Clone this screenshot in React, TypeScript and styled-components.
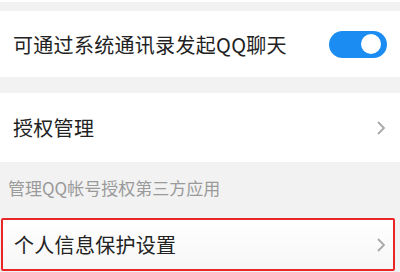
import styled, { createGlobalStyle } from "styled-components"

const GlobalStyle = createGlobalStyle`
    html, body {
        margin: 0;
        padding: 0;
        background: #f2f2f2;
        font-family: "Noto Sans CJK SC", "Noto Sans", sans-serif;
    }
`

const Page = styled.div`
    width: 400px;
    height: 272px;
    overflow: hidden;
    background: #f2f2f2;
    display: flex;
    flex-direction: column;
`

const TopGap = styled.div`
    height: 9px;
    border-top: 2px solid #ffffff;
`

const Gap = styled.div<{ $h: number }>`
    height: ${p => p.$h}px;
`

const Row = styled.div<{ $h: number; $highlight?: boolean }>`
    height: ${p => p.$h}px;
    box-sizing: border-box;
    background: #ffffff;
    display: flex;
    align-items: center;
    justify-content: space-between;
    padding: 0 14px 0 13px;
    ${p => p.$highlight && `
        margin: 0 5px 0 1px;
        border: 2px solid #e8262a;
        border-radius: 2px;
        padding: 0 7px 0 11px;
        background: linear-gradient(#ffffff, #f6f6f6);
    `}
`

const Label = styled.span`
    font-size: 20px;
    color: #222222;
    letter-spacing: 0.3px;
`

const SectionHeader = styled.div`
    height: 56px;
    box-sizing: border-box;
    padding: 13px 0 0 8px;
    font-size: 17px;
    color: #9a9a9a;
`

const Toggle = styled.div`
    width: 58px;
    height: 27px;
    border-radius: 14px;
    background: #1a8cf2;
    display: flex;
    align-items: center;
    justify-content: flex-end;
    padding-right: 6px;
    box-sizing: border-box;
    margin-right: -1px;
`

const Knob = styled.span`
    width: 20px;
    height: 20px;
    border-radius: 50%;
    background: #ffffff;
`

const Chevron = () => (
    <svg width="10" height="16" viewBox="0 0 10 16">
        <path d="M2 2 L8 8 L2 14" fill="none" stroke="#a8a8a8" strokeWidth="1.8" />
    </svg>
)

export default function App() {
    return (
        <Page>
            <GlobalStyle />
            <TopGap />
            <Row $h={66}>
                <Label>可通过系统通讯录发起QQ聊天</Label>
                <Toggle><Knob /></Toggle>
            </Row>
            <Gap $h={16} />
            <Row $h={69}>
                <Label>授权管理</Label>
                <Chevron />
            </Row>
            <SectionHeader>管理QQ帐号授权第三方应用</SectionHeader>
            <Row $h={53} $highlight>
                <Label>个人信息保护设置</Label>
                <Chevron />
            </Row>
        </Page>
    )
}
